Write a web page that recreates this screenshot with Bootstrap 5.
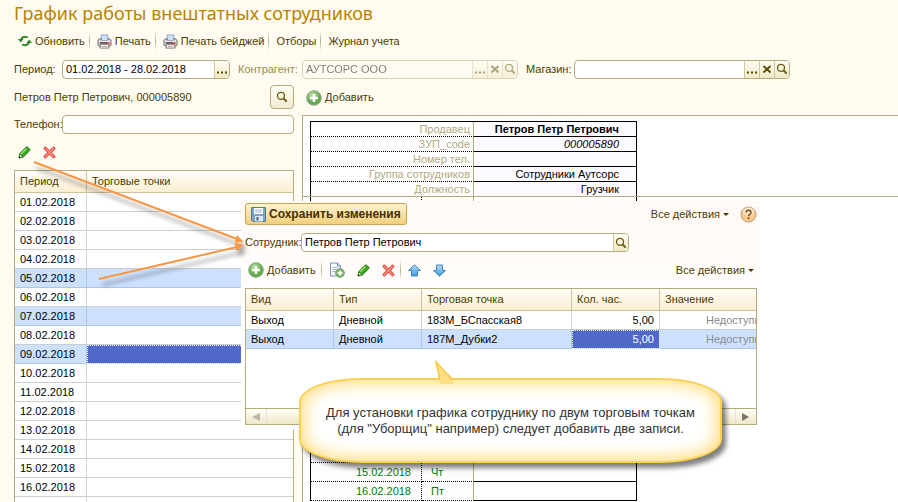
<!DOCTYPE html>
<html lang="ru">
<head>
<meta charset="utf-8">
<meta name="viewport" content="width=device-width, initial-scale=1">
<title>График работы внештатных сотрудников</title>
<link href="https://cdn.jsdelivr.net/npm/bootstrap@5.3.0/dist/css/bootstrap.min.css" rel="stylesheet">
<style>
:root{--line:#b5ac7c;--ink:#4a3c00;--cream:#fffbf0}
body{font:11px/15px "Liberation Sans",Arial,sans-serif;background:var(--cream);color:var(--ink)}
svg{display:block;flex:none}
.page-head{padding:2px 14px 0}
h1{font-family:"Noto Sans","Open Sans",sans-serif;font-size:18px;line-height:22px;color:#b88400}
button{font:inherit;color:inherit}
.tool{border:0;background:none;padding:0;display:flex;align-items:center;gap:3px;white-space:nowrap;color:var(--ink)}
.toolbar-row{height:34px}
.vline{width:1px;height:20px;margin:0 7px 0 4px;background:linear-gradient(#fffbf0,#b5ac8c,#fffbf0)}
.form-row{height:22px}
.field{display:flex;border:1px solid var(--line);border-radius:4px;overflow:hidden;background:#fff;height:19px}
.field input{border:0;background:transparent;font:inherit;color:#000;padding:0 0 0 3px;min-width:0;flex:1;outline:0}
.field button{border:0;border-left:1px solid #cfc79c;width:15px;padding:0;background:linear-gradient(#fffdf4,#efe8c6);color:#5a4a00;display:flex;align-items:center;justify-content:center}
.field.off{opacity:.5;background:#fffcf4}
.lbl-contr{color:#9a8c50}
.f-period{width:168px}.f-contr{width:216px}.f-shop{width:216px}
.l-period{width:48px}.l-contr{width:64px}.l-shop{width:48px}
.main-area{padding-left:14px}
.find-row{height:34px}.phone-row{height:21px}.edit-row{height:35px}.add-row{height:35px}
.side{width:280px;flex:none}
.find{width:24px;height:24px;border:1px solid var(--line);border-radius:4px;background:linear-gradient(#fffef8,#f1ebd0);padding:0;display:flex;align-items:center;justify-content:center}
.grid{table-layout:fixed;border-collapse:separate;border-spacing:0;width:100%;background:#fff;color:#000}
.grid th{height:22px;padding:0 5px;font-weight:400;color:var(--ink);background:linear-gradient(#fffdf6,#fbeed2);border-bottom:1px solid #cfc39a;border-right:1px solid #cfc39a}
.grid td{height:19px;padding:0 5px;border-bottom:1px solid #c9cfd3;border-right:1px solid #c9d3da;white-space:nowrap;overflow:hidden}
.grid th:last-child,.grid td:last-child{border-right:0}
.grid .pick td{background:#cde1ff;border-color:#a9c7ea}
.grid .pick td.cur{background:#5068c8;outline:1px dotted #fff;outline-offset:-1px;color:#fff}
.frame{border:1px solid var(--line)}
.c-day{width:72px}
.sheet-pane{background:#fff;border-left:1px solid var(--line);border-top:1px solid var(--line)}
.sheet-top{padding:5px 0 0 7px;border-bottom:1px solid var(--line)}
.sheet-bottom{padding-left:7px}
.sheet{table-layout:fixed;border-collapse:separate;border-spacing:0;width:327px;color:#000;border-left:1px solid #000;border-right:1px solid #000}
.sheet td{padding:0;height:15px;line-height:14px;text-align:right}
.sheet .cap{color:#b3aa80;padding-right:3px;border-right:1px solid var(--line);border-bottom:1px dotted #000}
.sheet .val{padding-right:17px;border-bottom:1px solid #000}
.sheet-top .val{background:#fdfbff}
.sheet-top .sheet{border-top:1px solid #000}
.sheet-top tr:last-child td{border-bottom:0;height:14px}
.sheet-bottom td{height:19px;color:#008000}
.sheet-bottom .date{padding-right:10px;border-right:1px dotted #000;border-bottom:1px dotted #000;background:#fffcfd}
.sheet-bottom .wd{text-align:left;padding-left:9px;border-right:1px solid var(--line);border-bottom:1px dotted #000;background:#fffcfd}
.w-cap{width:163px}.w-date{width:111px}.w-wd{width:52px}
.dlg{position:absolute;left:241px;top:201px;width:519px;padding:2px 3px 5px 4px;background:linear-gradient(#fff9f5,#fff 60%)}
.dlg-head{gap:11px}
.save{border:1px solid #c9a64b;border-radius:3px;background:linear-gradient(#fff3d0,#f2cf7c);height:22px;padding:0 5px;display:flex;align-items:center;gap:3px;font-weight:700;font-size:12px;color:#4a3000}
.caret{width:0;height:0;border:3px solid transparent;border-top-color:var(--ink);border-bottom:0}
.f-emp{width:328px}.l-emp{width:56px}
.emp-row{height:35px}
.dlg-tools{height:28px;padding:0 3px 8px}
.dlg-tools .vline{margin-left:5px}
.next{margin-left:12px}
.dlg-frame{width:512px}
.dlg-wrap{height:119px;overflow:hidden;background:#fff}.k1{width:88px}.k2{width:150px}
.grid td.dim{color:#8a8a8a;padding-left:46px}
.hbar{height:16px;border-top:1px solid var(--line);background:linear-gradient(#fffef8,#eee7c8)}
.hbar button{border:0;width:21px;background:none;padding:0;display:flex;align-items:center;justify-content:center}
.note{position:absolute;left:299px;top:378px;width:423px;height:85px;border:2px solid #fcd050;border-radius:62px/24px;background:#fff;box-shadow:inset 0 0 18px 2px #ffd76a,4px 5px 5px rgba(0,0,0,.5);color:#333;font-size:13px;line-height:16px;white-space:nowrap}
.note svg{position:absolute;left:134px;top:-20px}
.arrows{position:absolute;left:0;top:0;pointer-events:none}
</style>
<script src="https://cdn.jsdelivr.net/npm/bootstrap@5.3.0/dist/js/bootstrap.bundle.min.js"></script>
</head>
<body class="vh-100 overflow-hidden position-relative">
<svg width="0" height="0" class="position-absolute" aria-hidden="true">
<defs>
<radialGradient id="gr" cx=".4" cy=".3"><stop offset="0" stop-color="#b9e3a4"/><stop offset="1" stop-color="#5fab4c"/></radialGradient>
<linearGradient id="bl" x2="0" y2="1"><stop offset="0" stop-color="#b5e0f8"/><stop offset="1" stop-color="#3a9ade"/></linearGradient>
<symbol id="plus" viewBox="0 0 16 16"><circle cx="8" cy="8" r="7.300" fill="url(#gr)" stroke="#8aa585"/><path d="M8 4v8M4 8h8" stroke="#fff" stroke-width="2.600"/></symbol>
<symbol id="lens" viewBox="0 0 12 12"><circle cx="5" cy="4.800" r="3.500" fill="none" stroke="#6b5a10" stroke-width="1.300"/><path d="M7.500 7.300l3.200 3.300" stroke="#6b5a10" stroke-width="2"/></symbol>
<symbol id="cross" viewBox="0 0 10 10"><path d="M1.500 2l7 6.500M8.500 2l-7 6.500" stroke="#5a4a00" stroke-width="1.800"/></symbol>
<symbol id="dots" viewBox="0 0 12 10"><path d="M1 7.500h2v2H1zM5 7.500h2v2H5zM9 7.500h2v2H9z" fill="#5a4a00"/></symbol>
<symbol id="pen" viewBox="0 0 13 13"><path d="M1 12l.8-4.500L8 1.200q1-.7 2 .2l1.600 1.600q.9 1 0 1.800L5.300 11z" fill="#39a51c" stroke="#1d7410" stroke-width=".9"/><path d="M3 8l5.500-5.500" stroke="#9be678" stroke-width="1.500"/><path d="M1.800 8l3 3L1 12z" fill="#e8f0d8" stroke="#1d5510" stroke-width=".6"/><path d="M1 12l.4-2 1.400 1.500z" fill="#123"/></symbol>
<symbol id="del" viewBox="0 0 13 13"><path d="M2.300 2.300l8.400 8.400M10.700 2.300l-8.400 8.400" stroke="#e0413b" stroke-width="3.300" stroke-linecap="round"/><path d="M2.300 2.300l8.400 8.400M10.700 2.300l-8.400 8.400" stroke="#ff8f80" stroke-width="1.500" stroke-linecap="round"/></symbol>
<symbol id="prn" viewBox="0 0 16 16"><path d="M4.500 1h7v6h-7z" fill="#cfe4fa" stroke="#8da4c8"/><path d="M1 6.500L3 5h1.500v2h7V5H13l2 1.500V12l-2 1H3l-2-1z" fill="#c9c3c6" stroke="#75707a"/><path d="M2 7h12v2H2z" fill="#eeeaf0"/><path d="M3 9.500h8" stroke="#40363a" stroke-width="1.500"/><path d="M10.500 9h3v1.600h-3z" fill="#e23a28"/><path d="M4 11h8l1 4H3z" fill="#fff" stroke="#777"/><path d="M5 13h6" stroke="#c78a70"/></symbol>
</defs>
</svg>

<header class="page-head">
<h1 class="m-0 fw-normal">График работы внештатных сотрудников</h1>
<nav class="toolbar-row d-flex align-items-center">
<button class="tool ms-1"><svg width="14" height="12" viewBox="0 0 14 12"><path d="M3 4.500Q4.500 1.500 8 1.800L10 2.500M11 7.500Q9.500 10.500 6 10.200L4 9.500" fill="none" stroke="#2f8a25" stroke-width="1.800"/><path d="M0 4h5.500L2.700 7.500zM14 8H8.500l2.800-3.500z" fill="#2f8a25"/></svg>Обновить</button>
<span class="vline"></span>
<button class="tool"><svg width="15" height="15"><use href="#prn"/></svg>Печать</button>
<span class="vline"></span>
<button class="tool"><svg width="15" height="15"><use href="#prn"/></svg>Печать бейджей</button>
<span class="vline"></span>
<button class="tool">Отборы</button>
<span class="vline"></span>
<button class="tool">Журнал учета</button>
</nav>
<div class="form-row d-flex align-items-center">
<label for="period" class="l-period">Период:</label>
<div class="field f-period"><input id="period" value="01.02.2018 - 28.02.2018"><button aria-label="Выбрать"><svg width="12" height="10"><use href="#dots"/></svg></button></div>
<label for="contr" class="l-contr lbl-contr ms-2">Контрагент:</label>
<div class="field f-contr off"><input id="contr" value="АУТСОРС ООО" disabled><button disabled aria-label="Выбрать"><svg width="12" height="10"><use href="#dots"/></svg></button><button disabled aria-label="Очистить"><svg width="10" height="10"><use href="#cross"/></svg></button><button disabled aria-label="Открыть"><svg width="12" height="12"><use href="#lens"/></svg></button></div>
<label for="shop" class="l-shop ms-2">Магазин:</label>
<div class="field f-shop"><input id="shop"><button aria-label="Выбрать"><svg width="12" height="10"><use href="#dots"/></svg></button><button aria-label="Очистить"><svg width="10" height="10"><use href="#cross"/></svg></button><button aria-label="Открыть"><svg width="12" height="12"><use href="#lens"/></svg></button></div>
</div>
</header>

<main class="d-flex gap-2 main-area">
<section class="side">
<div class="d-flex align-items-center justify-content-between find-row"><span>Петров Петр Петрович, 000005890</span><button class="find" aria-label="Найти"><svg width="12" height="12"><use href="#lens"/></svg></button></div>
<div class="d-flex align-items-center phone-row"><label for="phone" class="l-period">Телефон:</label><div class="field flex-grow-1"><input id="phone"></div></div>
<div class="d-flex align-items-center gap-1 edit-row"><button class="tool px-1" aria-label="Изменить"><svg width="13" height="13"><use href="#pen"/></svg></button><button class="tool px-1" aria-label="Удалить"><svg width="13" height="13"><use href="#del"/></svg></button></div>
<div class="frame">
<table class="grid"><thead><tr><th class="c-day">Период</th><th>Торговые точки</th></tr></thead><tbody>
<tr><td>01.02.2018</td><td></td></tr><tr><td>02.02.2018</td><td></td></tr><tr><td>03.02.2018</td><td></td></tr><tr><td>04.02.2018</td><td></td></tr>
<tr class="pick"><td>05.02.2018</td><td></td></tr><tr><td>06.02.2018</td><td></td></tr><tr class="pick"><td>07.02.2018</td><td></td></tr><tr><td>08.02.2018</td><td></td></tr>
<tr class="pick"><td>09.02.2018</td><td class="cur"></td></tr><tr><td>10.02.2018</td><td></td></tr><tr><td>11.02.2018</td><td></td></tr><tr><td>12.02.2018</td><td></td></tr>
<tr><td>13.02.2018</td><td></td></tr><tr><td>14.02.2018</td><td></td></tr><tr><td>15.02.2018</td><td></td></tr><tr><td>16.02.2018</td><td></td></tr><tr><td>17.02.2018</td><td></td></tr>
</tbody></table>
</div>
</section>
<section class="flex-grow-1 d-flex flex-column">
<div class="add-row d-flex align-items-center"><button class="tool ms-1"><svg width="16" height="16"><use href="#plus"/></svg>Добавить</button></div>
<div class="sheet-pane flex-grow-1">
<div class="sheet-top"><table class="sheet"><colgroup><col class="w-cap"><col></colgroup><tbody>
<tr><td class="cap">Продавец</td><td class="val fw-bold">Петров Петр Петрович</td></tr>
<tr><td class="cap">ЗУП_code</td><td class="val fst-italic">000005890</td></tr>
<tr><td class="cap">Номер тел.</td><td class="val"></td></tr>
<tr><td class="cap">Группа сотрудников</td><td class="val">Сотрудники Аутсорс</td></tr>
<tr><td class="cap">Должность</td><td class="val">Грузчик</td></tr>
</tbody></table></div>
<div class="sheet-bottom"><table class="sheet"><colgroup><col class="w-date"><col class="w-wd"><col></colgroup><tbody>
<tr><td class="date"></td><td class="wd"></td><td class="val"></td></tr><tr><td class="date"></td><td class="wd"></td><td class="val"></td></tr><tr><td class="date"></td><td class="wd"></td><td class="val"></td></tr><tr><td class="date"></td><td class="wd"></td><td class="val"></td></tr><tr><td class="date"></td><td class="wd"></td><td class="val"></td></tr><tr><td class="date"></td><td class="wd"></td><td class="val"></td></tr><tr><td class="date"></td><td class="wd"></td><td class="val"></td></tr><tr><td class="date"></td><td class="wd"></td><td class="val"></td></tr><tr><td class="date"></td><td class="wd"></td><td class="val"></td></tr><tr><td class="date"></td><td class="wd"></td><td class="val"></td></tr><tr><td class="date"></td><td class="wd"></td><td class="val"></td></tr><tr><td class="date"></td><td class="wd"></td><td class="val"></td></tr><tr><td class="date"></td><td class="wd"></td><td class="val"></td></tr><tr><td class="date"></td><td class="wd"></td><td class="val"></td></tr>
<tr><td class="date">15.02.2018</td><td class="wd">Чт</td><td class="val"></td></tr>
<tr><td class="date">16.02.2018</td><td class="wd">Пт</td><td class="val"></td></tr>
</tbody></table></div>
</div>
</section>
</main>

<section class="dlg">
<div class="d-flex align-items-center dlg-head">
<button class="save me-auto"><svg width="15" height="15" viewBox="0 0 15 15"><path d="M.5 .5h14v14H2l-1.500-1.500z" fill="#7fa3c8" stroke="#5378a0"/><path d="M3 1h9v6H3z" fill="#fff"/><path d="M4 3h7M4 5h7" stroke="#9ab4d0"/><path d="M4 9h8v5.500H4z" fill="#dfe9f2"/><path d="M5.500 10h2v3.500h-2z" fill="#3c5f88"/></svg>Сохранить изменения</button>
<button class="tool">Все действия<span class="caret"></span></button><button class="tool" aria-label="Справка"><svg width="17" height="17" viewBox="0 0 17 17"><circle cx="8.500" cy="8.500" r="7.500" fill="#fbc98c" stroke="#b39a80"/><ellipse cx="8.500" cy="5.500" rx="5.500" ry="4" fill="#fee7c8"/><path d="M6 6.700Q6 4.300 8.500 4.300T11 6.500Q11 7.700 9.700 8.300Q8.600 8.900 8.600 10" fill="none" stroke="#7a4a20" stroke-width="1.400"/><circle cx="8.600" cy="12.300" r="1" fill="#7a4a20"/></svg></button>
</div>
<div class="d-flex align-items-center emp-row"><label for="emp" class="l-emp">Сотрудник:</label><div class="field f-emp"><input id="emp" value="Петров Петр Петрович"><button aria-label="Открыть"><svg width="12" height="12"><use href="#lens"/></svg></button></div></div>
<div class="d-flex align-items-center dlg-tools">
<button class="tool"><svg width="16" height="16"><use href="#plus"/></svg>Добавить</button><span class="vline"></span>
<button class="tool" aria-label="Скопировать"><svg width="16" height="16" viewBox="0 0 16 16"><path d="M1.500 1h7l3 3v10h-10z" fill="#f4f9ff" stroke="#7b93b4"/><path d="M8.500 1v3h3" fill="none" stroke="#7b93b4"/><path d="M3.500 5.500h5M3.500 7.500h4M3.500 9.500h3" stroke="#9bb3ce"/><circle cx="11" cy="11" r="4.300" fill="#7dbd69" stroke="#6f9a6a"/><path d="M11 8.500v5M8.500 11h5" stroke="#fff" stroke-width="1.700"/></svg></button>
<button class="tool next" aria-label="Изменить"><svg width="13" height="13"><use href="#pen"/></svg></button>
<button class="tool next" aria-label="Удалить"><svg width="13" height="13"><use href="#del"/></svg></button>
<span class="vline"></span>
<button class="tool" aria-label="Вверх"><svg width="13" height="13" viewBox="0 0 13 13"><path d="M6.500 .8l6 5.700h-3v5.500h-6V6.500h-3z" fill="url(#bl)" stroke="#3a78ac" stroke-width=".9"/></svg></button>
<button class="tool next" aria-label="Вниз"><svg width="13" height="13" viewBox="0 0 13 13"><path d="M6.500 12.200l6-5.700h-3V1h-6v5.500h-3z" fill="url(#bl)" stroke="#3a78ac" stroke-width=".9"/></svg></button>
<button class="tool ms-auto">Все действия<span class="caret"></span></button>
</div>
<div class="frame dlg-frame">
<div class="dlg-wrap"><table class="grid"><colgroup><col class="k1"><col class="k1"><col class="k2"><col class="k1"><col></colgroup>
<thead><tr><th>Вид</th><th>Тип</th><th>Торговая точка</th><th>Кол. час.</th><th>Значение</th></tr></thead><tbody>
<tr><td>Выход</td><td>Дневной</td><td>183М_БСпасская8</td><td class="text-end">5,00</td><td class="dim">Недоступно</td></tr>
<tr class="pick"><td>Выход</td><td>Дневной</td><td>187М_Дубки2</td><td class="text-end cur">5,00</td><td class="dim">Недоступно</td></tr></tbody></table></div>
<div class="hbar d-flex justify-content-between"><button class="border-end" aria-label="Влево"><svg width="8" height="8" viewBox="0 0 8 8"><path d="M8 0v8L0 4z" fill="#b9b6ac"/></svg></button><button class="border-start" aria-label="Вправо"><svg width="8" height="8" viewBox="0 0 8 8"><path d="M0 0v8l7-4z" fill="#77746c"/></svg></button></div>
</div>
</section>

<svg class="arrows" width="250" height="300" viewBox="0 0 250 300"><defs><filter id="sh" x="-20%" y="-20%" width="140%" height="150%"><feDropShadow dx="3" dy="6" stdDeviation="2" flood-color="#000" flood-opacity=".4"/></filter></defs><g filter="url(#sh)" stroke="#f79646" stroke-width="2" fill="#f79646"><path d="M34 162L237 239M99 279L237 247"/><path d="M243.500 242L237 235l-2.500 7.500zM243.500 245l-9-2.500 2 8.500z" stroke="none"/></g></svg>

<aside class="note d-flex align-items-center justify-content-center text-center"><svg width="26" height="24" viewBox="0 0 26 24"><path d="M5 21L1 2L18 21v3H5z" fill="#ffdf85"/><path d="M5 20L1 2L18 20" fill="none" stroke="#fcc63c" stroke-width="1.500"/></svg><div>Для установки графика сотруднику по двум торговым точкам<br>(для "Уборщиц" например) следует добавить две записи.</div></aside>
</body>
</html>
